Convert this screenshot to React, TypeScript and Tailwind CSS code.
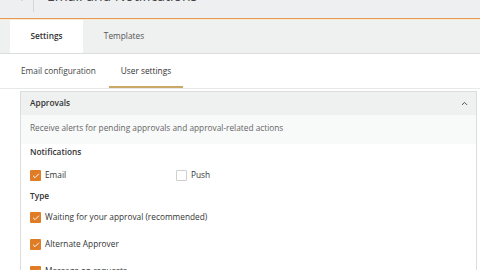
import { ChevronLeft, ChevronUp, Check } from "lucide-react";

type Row = { label: string; checked: boolean };

const types: Row[] = [
  { label: "Waiting for your approval (recommended)", checked: true },
  { label: "Alternate Approver", checked: true },
  { label: "Message on requests", checked: true },
];

function Box({ checked }: { checked: boolean }) {
  return checked ? (
    <span className="flex h-[11px] w-[11px] shrink-0 items-center justify-center rounded-[1px] bg-[#e07b26]">
      <Check className="h-[8px] w-[8px] text-white" strokeWidth={3} />
    </span>
  ) : (
    <span className="h-[11px] w-[11px] shrink-0 rounded-[1px] border border-[#cfcfcf] bg-white" />
  );
}

export default function App() {
  return (
    <div
      className="flex h-[270px] w-[480px] flex-col overflow-hidden bg-white text-[8.3px] text-[#333]"
      style={{ fontFamily: '"Open Sans", sans-serif' }}
    >
      {/* page header, cropped at the top */}
      <div className="flex h-[18px] shrink-0 items-start overflow-hidden bg-[#eeeff0]">
        <ChevronLeft className="-mt-[9px] ml-[14px] h-[12px] w-[12px] text-[#555]" strokeWidth={2} />
        <div className="ml-[7px] h-[12px] w-px bg-[#d6d6d6]" />
        <span className="-mt-[11px] ml-[13px] text-[14px] leading-[14px] text-[#444]">
          Email and Notifications
        </span>
      </div>
      <div className="h-px shrink-0 bg-[#e39a55]" />
      <div className="h-px shrink-0 bg-[#fbe9d6]" />

      {/* main tabs */}
      <div className="flex h-[34px] shrink-0 border-b border-[#dddddd] bg-[#eff0f0]">
        <div className="ml-[10px] flex w-[73px] items-center justify-center bg-white font-semibold">
          Settings
        </div>
        <div className="flex w-[82px] items-center justify-center text-[#555]">Templates</div>
      </div>

      {/* sub tabs */}
      <div className="flex h-[35px] shrink-0 border-b border-[#e8e8e8]">
        <div className="ml-[21px] flex items-center text-[#444]">Email configuration</div>
        <div className="ml-[13px] flex w-[74px] items-center justify-center border-b-2 border-[#c9a868] pt-[2px]">
          User settings
        </div>
      </div>

      {/* approvals panel */}
      <div className="ml-[20px] mr-[3px] mt-[2px] flex flex-1 flex-col border border-b-0 border-[#dcdcdc]">
        <div className="flex h-[23px] shrink-0 items-center justify-between bg-[#eff0f0] pl-[9px] pr-[7px]">
          <span className="font-semibold">Approvals</span>
          <ChevronUp className="h-[9px] w-[9px] text-[#444]" strokeWidth={2.5} />
        </div>
        <div className="flex h-[29px] shrink-0 items-center bg-[#f8f9f9] pb-[3px] pl-[9px] text-[#666]">
          Receive alerts for pending approvals and approval-related actions
        </div>
        <div className="flex h-[17px] shrink-0 items-center pl-[9px] font-semibold">Notifications</div>
        <div className="flex h-[28px] shrink-0 items-center pl-[9px] pt-[1px]">
          <div className="flex w-[146px] items-center gap-[4px]">
            <Box checked />
            <span>Email</span>
          </div>
          <div className="flex items-center gap-[4px]">
            <Box checked={false} />
            <span>Push</span>
          </div>
        </div>
        <div className="flex h-[14px] shrink-0 items-center pl-[9px] font-semibold">Type</div>
        <div className="flex flex-col gap-[16px] pl-[9px] pt-[9px]">
          {types.map((t) => (
            <div key={t.label} className="flex h-[11px] items-center gap-[4px]">
              <Box checked={t.checked} />
              <span>{t.label}</span>
            </div>
          ))}
        </div>
      </div>
    </div>
  );
}
